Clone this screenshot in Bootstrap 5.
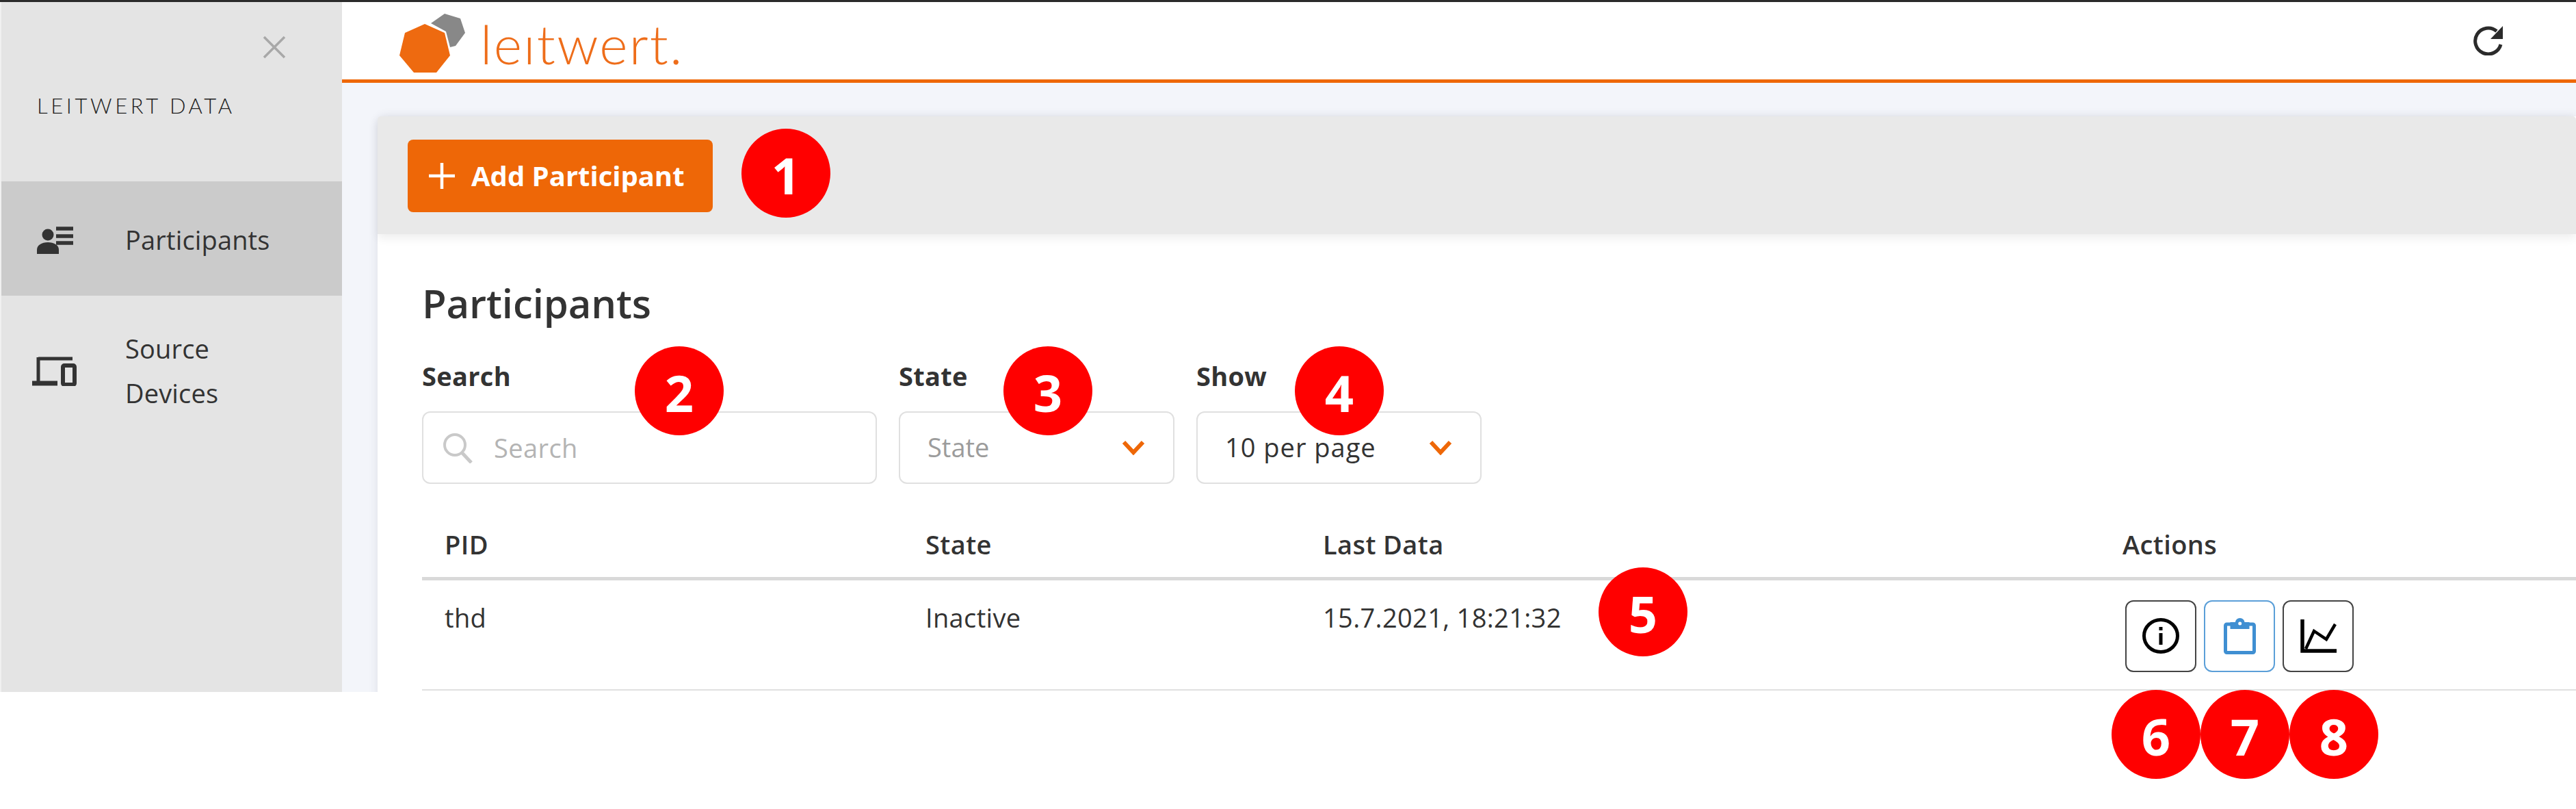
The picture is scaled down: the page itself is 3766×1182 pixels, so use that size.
<!DOCTYPE html>
<html lang="en">
<head>
<meta charset="utf-8">
<title>Leitwert Data</title>
<link href="https://cdn.jsdelivr.net/npm/bootstrap@5.3.0/dist/css/bootstrap.min.css" rel="stylesheet">
<style>
html,body{margin:0;background:#fff;}
body{font-family:"Open Sans","Noto Sans",sans-serif;color:#333;}
.shot{position:relative;width:3766px;height:1182px;overflow:hidden;background:#fff;}
.topline{height:3px;background:#2b2b2b;}
.app{height:1008px;overflow:hidden;}
.side{width:500px;flex:none;background:#e4e4e4;border-left:2px solid #f0f0f0;}
.side-head{height:262px;padding:49px 82px 0 52px;}
.side-x{display:block;width:34px;height:34px;margin-bottom:49px;}
.side-title{font-family:"Lato","Open Sans",sans-serif;font-weight:300;font-size:31px;line-height:38px;letter-spacing:4.6px;color:#222;white-space:nowrap;}
.side-link{font-size:38px;line-height:65px;letter-spacing:.15px;color:#333;padding-left:44px;gap:71px;}
.side-link.active-item{background:#cbcbcb;height:167px;padding-top:3px;}
.side-link.plain{height:220px;}
.side-link svg{flex:none;}
.main{min-width:0;background:#f3f5fa;}
.head{height:118px;background:#fff;border-bottom:5px solid #ee6707;padding-left:84px;padding-right:107px;}
.logo-mark{flex:none;margin-top:6px;}
.logo-word{font-family:"Lato","Open Sans",sans-serif;font-weight:300;font-size:79px;line-height:1;color:#ee6d1a;letter-spacing:2.2px;margin-left:22px;margin-top:8px;}
.sheet{margin:49px 0 0 52px;border:0;border-radius:12px 0 0 0;background:#fff;box-shadow:0 0 14px rgba(60,60,80,.12);height:900px;}
.sheet-top{height:172px;background:#e9e9e9;border:0;padding:34px 44px;border-radius:12px 0 0 0;box-shadow:0 6px 14px rgba(0,0,0,.07);}
.add-btn{width:446px;height:106px;background:#ee6707;border:0;border-radius:8px;color:#fff;font-size:40px;font-weight:700;padding:0 0 0 30px;gap:23px;}
.add-btn:hover{background:#ee6707;color:#fff;}
.sheet-body{padding:66px 0 0 65px;}
.page-title{font-size:58px;font-weight:600;letter-spacing:-.1px;line-height:70px;margin:0 0 46px;color:#333;}
.filters{gap:32px;margin-bottom:55px;}
.fld-label{font-size:38px;font-weight:700;letter-spacing:.3px;line-height:50px;margin-bottom:27px;color:#333;}
.fld-search{width:665px;}
.fld-state{width:403px;}
.fld-show{width:417px;}
.fld-box{height:106px;border:2.5px solid #e0e0e0;border-radius:12px;box-shadow:none;}
.fld-box .input-group-text{background:transparent;border:0;padding:0 0 0 27px;}
.fld-box input{border:0;height:100%;font-size:38px;letter-spacing:.4px;padding:0 0 0 31px;color:#333;box-shadow:none;background:transparent;}
.fld-box input::placeholder{color:#b4b4b4;opacity:1;}
.pick{height:106px;border:2.5px solid #e0e0e0;border-radius:12px;font-size:38px;letter-spacing:1px;padding:0 60px 2px 40px;box-shadow:none;color:#333;background-size:34px 22px;background-position:right 41px center;background-repeat:no-repeat;background-image:url("data:image/svg+xml,%3Csvg xmlns='http://www.w3.org/2000/svg' viewBox='0 0 34 22'%3E%3Cpath d='M3 3l14 15L31 3' fill='none' stroke='%23ee6707' stroke-width='6'/%3E%3C/svg%3E");}
.pick.muted{color:#9c9c9c;letter-spacing:0;}
.grid-table{table-layout:fixed;width:3149px;margin:0;color:#333;}
.grid-table th{font-size:38px;font-weight:600;letter-spacing:.4px;height:83px;padding:0 0 14px 33px;border-bottom:5px solid #d9d9d9;vertical-align:middle;}
.grid-table td{font-size:38px;letter-spacing:.35px;height:163px;padding:29px 0 0 33px;border-bottom:2.5px solid #e0e0e0;vertical-align:top;line-height:50px;}
.grid-table td.acts{padding:29px 0 0 37px;}
.act{width:104px;height:105px;padding:0;border:2px solid #444;border-radius:12px;background:#fff;margin-right:11px;}
.act.blue{border-color:#5b9fd8;}
.num{position:absolute;width:130px;height:130px;border-radius:50%;background:#f00;color:#fff;font-size:74px;font-weight:700;line-height:1;padding-top:5px;}
.n1{left:1084px;top:188px;}
.n2{left:928px;top:506px;}
.n3{left:1467px;top:506px;}
.n4{left:1893px;top:506px;}
.n5{left:2337px;top:829px;}
.n6{left:3087px;top:1008px;}
.n7{left:3217px;top:1008px;}
.n8{left:3347px;top:1008px;}
</style>
</head>
<body>
<div class="shot">
  <div class="topline"></div>
  <div class="app d-flex">
    <aside class="side">
      <div class="side-head">
        <svg class="side-x ms-auto" viewBox="0 0 34 34"><path d="M2 2l30 30M32 2L2 32" stroke="#a8a8a8" stroke-width="3.5" fill="none"/></svg>
        <div class="side-title">LEITWERT DATA</div>
      </div>
      <div class="side-link active-item d-flex align-items-center">
        <svg width="66" height="44" viewBox="0 0 66 44"><circle cx="24" cy="15" r="8.5" fill="#333"/><path d="M8 43v-6c0-7 7-11 16-11s16 4 16 11v6z" fill="#333"/><path d="M36 6h25M36 17h25M36 27h25" stroke="#333" stroke-width="5.5"/></svg>
        <span>Participants</span>
      </div>
      <div class="side-link plain d-flex align-items-center">
        <svg width="66" height="44" viewBox="0 0 66 44"><path d="M10 4h50M10 2v36" stroke="#333" stroke-width="5" fill="none"/><path d="M1 40h37" stroke="#333" stroke-width="7"/><rect x="46" y="14" width="17" height="28" rx="2" fill="none" stroke="#333" stroke-width="6"/></svg>
        <span>Source<br>Devices</span>
      </div>
    </aside>
    <main class="main flex-grow-1">
      <header class="head d-flex align-items-center">
        <svg class="logo-mark" width="96" height="87" viewBox="0 0 96 87"><polygon points="46,15 66,1 89,8 96,29 82,48 74,50 68,27" fill="#888"/><polygon points="37,16 66,29 74,62 54,87 21,87 0,62 8,29" fill="#ee6a10"/></svg>
        <span class="logo-word">leıtwert.</span>
        <svg class="ms-auto" width="43" height="43" viewBox="0 0 43 43"><path d="M34 7.5A19 19 0 1 0 40 27" fill="none" stroke="#2b2b2b" stroke-width="5"/><path d="M43 0v19H25z" fill="#2b2b2b"/></svg>
      </header>
      <section class="card sheet">
        <div class="card-header sheet-top">
          <button type="button" class="btn add-btn d-flex align-items-center">
            <svg width="40" height="40" viewBox="0 0 40 40"><path d="M20 1v38M1 20h38" stroke="#fff" stroke-width="4.5"/></svg>
            <span>Add Participant</span>
          </button>
        </div>
        <div class="card-body sheet-body">
          <h2 class="page-title">Participants</h2>
          <div class="filters d-flex">
            <div class="fld-search">
              <div class="fld-label">Search</div>
              <div class="input-group fld-box flex-nowrap">
                <span class="input-group-text"><svg width="46" height="46" viewBox="0 0 46 46"><circle cx="19" cy="19" r="15" fill="none" stroke="#c9c9c9" stroke-width="4"/><path d="M29 30l14 15" stroke="#c9c9c9" stroke-width="5"/></svg></span>
                <input class="form-control" type="text" placeholder="Search" aria-label="Search">
              </div>
            </div>
            <div class="fld-state">
              <div class="fld-label">State</div>
              <select class="form-select pick muted" aria-label="State"><option>State</option></select>
            </div>
            <div class="fld-show">
              <div class="fld-label">Show</div>
              <select class="form-select pick" aria-label="Show"><option>10 per page</option></select>
            </div>
          </div>
          <table class="table grid-table">
            <colgroup><col style="width:703px"><col style="width:581px"><col style="width:1169px"><col></colgroup>
            <thead><tr><th>PID</th><th>State</th><th>Last Data</th><th>Actions</th></tr></thead>
            <tbody>
              <tr>
                <td>thd</td><td>Inactive</td><td>15.7.2021, 18:21:32</td>
                <td class="acts"><div class="d-flex">
                  <button type="button" class="btn act d-flex align-items-center justify-content-center" aria-label="Info"><svg width="54" height="52" viewBox="0 0 54 52"><ellipse cx="27" cy="26" rx="24.5" ry="23.5" fill="none" stroke="#000" stroke-width="5"/><rect x="24.5" y="22" width="5" height="17" fill="#000"/><rect x="24.5" y="13" width="5" height="5" fill="#000"/></svg></button>
                  <button type="button" class="btn act blue d-flex align-items-center justify-content-center" aria-label="Clipboard"><svg width="47" height="53" viewBox="0 0 47 53"><rect x="2.5" y="9" width="42" height="41.5" rx="2" fill="none" stroke="#3f8fd2" stroke-width="5"/><path d="M9.5 6h28v10h-28z" fill="#3f8fd2"/><circle cx="23.7" cy="7" r="7" fill="#3f8fd2"/><circle cx="23.7" cy="8" r="2.5" fill="#fff"/></svg></button>
                  <button type="button" class="btn act d-flex align-items-center justify-content-center" aria-label="Chart"><svg width="54" height="49" viewBox="0 0 54 49"><path d="M4 0v46h50" fill="none" stroke="#000" stroke-width="5.5"/><path d="M9 43L21 17l18 12L52 7" fill="none" stroke="#000" stroke-width="4.5"/></svg></button>
                </div></td>
              </tr>
            </tbody>
          </table>
        </div>
      </section>
    </main>
  </div>
  <div class="num n1 d-flex align-items-center justify-content-center">1</div>
  <div class="num n2 d-flex align-items-center justify-content-center">2</div>
  <div class="num n3 d-flex align-items-center justify-content-center">3</div>
  <div class="num n4 d-flex align-items-center justify-content-center">4</div>
  <div class="num n5 d-flex align-items-center justify-content-center">5</div>
  <div class="num n6 d-flex align-items-center justify-content-center">6</div>
  <div class="num n7 d-flex align-items-center justify-content-center">7</div>
  <div class="num n8 d-flex align-items-center justify-content-center">8</div>
</div>
<script src="https://cdn.jsdelivr.net/npm/bootstrap@5.3.0/dist/js/bootstrap.bundle.min.js"></script>
</body>
</html>
